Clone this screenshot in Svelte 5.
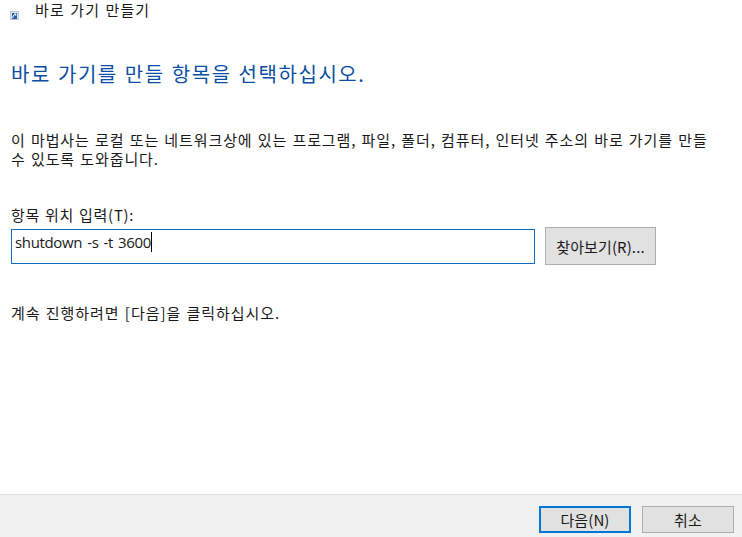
<script>
  const intro = '이 마법사는 로컬 또는 네트워크상에 있는 프로그램, 파일, 폴더, 컴퓨터, 인터넷 주소의 바로 가기를 만들';
  const intro2 = '수 있도록 도와줍니다.';
</script>

<div class="wizard">
  <header class="title">
    <svg class="icon" width="9" height="9" viewBox="0 0 9 9" aria-hidden="true">
      <rect x="0.5" y="0.5" width="8" height="8" fill="#dfe3ea" stroke="#c4c8d0" />
      <rect x="2" y="2" width="5" height="6" fill="#1d5fa8" />
      <path d="M3 7 V5 L5.5 3 M4 3 H5.8 V4.8" fill="none" stroke="#fff" stroke-width="1" />
    </svg>
    <span>바로 가기 만들기</span>
  </header>

  <main class="body">
    <h1>바로 가기를 만들 항목을 선택하십시오.</h1>
    <div class="intro">
      <p>{intro}</p>
      <p>{intro2}</p>
    </div>
    <label class="label" for="loc">항목 위치 입력(T):</label>
    <div class="row">
      <div class="input" id="loc"><span>shutdown -s -t 3600</span><i class="caret"></i></div>
      <button class="btn browse" type="button">찾아보기(R)...</button>
    </div>
    <p class="cont">계속 진행하려면 [다음]을 클릭하십시오.</p>
  </main>

  <footer class="foot">
    <button class="btn primary" type="button">다음(N)</button>
    <button class="btn" type="button">취소</button>
  </footer>
</div>

<style>
  :global(body) {
    margin: 0;
    background: #fff;
  }
  .wizard {
    width: 742px;
    height: 537px;
    display: flex;
    flex-direction: column;
    font-family: "Noto Sans CJK KR", "Open Sans", sans-serif;
    font-size: 15px;
    color: #1a1a1a;
    overflow: hidden;
  }
  .title {
    height: 33px;
    flex: none;
    display: flex;
    align-items: flex-start;
    padding: 1px 0 0 10px;
    box-sizing: border-box;
  }
  .icon {
    margin-top: 10px;
  }
  .title span {
    margin-left: 16px;
    line-height: 18px;
    letter-spacing: 1.1px;
    word-spacing: 1px;
  }
  .body {
    flex: 1;
    padding: 0 0 0 11px;
  }
  h1 {
    margin: 27px 0 0;
    font-size: 20px;
    font-weight: 400;
    line-height: 28px;
    color: #0a4fa3;
    letter-spacing: 1.55px;
    word-spacing: 1px;
  }
  .intro {
    margin-top: 42px;
    line-height: 19px;
    letter-spacing: 0.9px;
    word-spacing: 1px;
  }
  p {
    margin: 0;
    white-space: nowrap;
  }
  .label {
    display: block;
    margin-top: 37px;
    line-height: 20px;
    letter-spacing: 0.7px;
    word-spacing: 1px;
  }
  .row {
    display: flex;
    align-items: flex-start;
    margin-top: 4px;
  }
  .input {
    width: 524px;
    height: 35px;
    box-sizing: border-box;
    border: 1px solid #0f6fc6;
    padding: 2px 0 0 3px;
    display: flex;
    align-items: flex-start;
    font-family: "Open Sans", sans-serif;
    font-size: 15px;
    line-height: 20px;
    letter-spacing: -0.35px;
    word-spacing: 1.5px;
  }
  .caret {
    width: 1px;
    height: 20px;
    background: #000;
  }
  .btn {
    width: 111px;
    height: 38px;
    box-sizing: border-box;
    padding: 0;
    border: 1px solid #adadad;
    background: #e1e1e1;
    color: #1a1a1a;
    font: inherit;
    font-size: 15px;
    letter-spacing: 0.1px;
  }
  .browse {
    margin-left: 10px;
    margin-top: -2px;
  }
  .cont {
    margin-top: 37px;
    line-height: 21px;
    letter-spacing: 0.95px;
    word-spacing: 1px;
  }
  .foot {
    height: 43px;
    flex: none;
    box-sizing: border-box;
    background: #f0f0f0;
    border-top: 1px solid #dfdfdf;
    display: flex;
    justify-content: flex-end;
    align-items: flex-start;
    gap: 11px;
    padding: 11px 8px 0 0;
  }
  .foot .btn {
    width: 92px;
    height: 27px;
    padding-bottom: 1px;
    line-height: 1;
  }
  .primary {
    border: 2px solid #0078d7;
  }
</style>
